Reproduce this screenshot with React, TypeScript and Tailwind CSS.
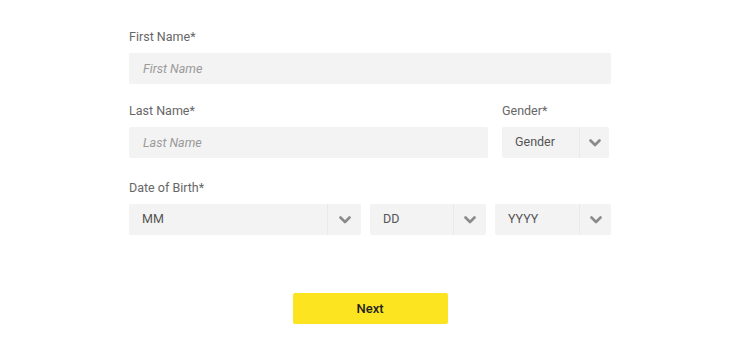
import React from "react";

function Chevron() {
  return (
    <svg width="12" height="8" viewBox="0 0 12 8" fill="none">
      <polyline points="1.5,1.5 6,6 10.5,1.5" stroke="#8a8a8a" strokeWidth="2.6" strokeLinecap="round" strokeLinejoin="round" />
    </svg>
  );
}

function Select({ value, width, arrow }: { value: string; width: string; arrow: string }) {
  return (
    <div className={`flex h-[31px] items-stretch rounded-[2px] bg-[#f3f3f3] ${width}`}>
      <div className="flex flex-1 items-center pl-[13px] text-[12.5px] text-[#555]">{value}</div>
      <div className={`flex items-center justify-center border-l border-[#e9e9e9] ${arrow}`}>
        <Chevron />
      </div>
    </div>
  );
}

function Label({ children }: { children: React.ReactNode }) {
  return <div className="mb-2 h-4 text-[12.5px] leading-4 text-[#666]">{children}</div>;
}

export default function App() {
  return (
    <div className="flex h-[352px] w-full justify-center bg-white font-['Roboto',sans-serif]">
      <div className="w-[482px] pt-[29px]">
        <Label>First Name*</Label>
        <input
          placeholder="First Name"
          className="h-[31px] w-full rounded-[2px] bg-[#f3f3f3] px-[14px] text-[12.5px] italic text-[#555] outline-none placeholder:text-[#9a9a9a]"
        />

        <div className="mt-[19px] flex gap-[14px]">
          <div className="w-[359px]">
            <Label>Last Name*</Label>
            <input
              placeholder="Last Name"
              className="h-[31px] w-full rounded-[2px] bg-[#f3f3f3] px-[14px] text-[12.5px] italic text-[#555] outline-none placeholder:text-[#9a9a9a]"
            />
          </div>
          <div className="w-[107px]">
            <Label>Gender*</Label>
            <Select value="Gender" width="w-[107px]" arrow="w-[30px]" />
          </div>
        </div>

        <div className="mt-[22px]">
          <Label>Date of Birth*</Label>
          <div className="flex gap-[9px]">
            <Select value="MM" width="w-[232px]" arrow="w-[34px]" />
            <Select value="DD" width="w-[116px]" arrow="w-[33px]" />
            <Select value="YYYY" width="w-[116px]" arrow="w-[32px]" />
          </div>
        </div>

        <div className="mt-[58px] flex justify-center">
          <button className="h-[31px] w-[155px] rounded-[2px] bg-[#fde420] text-[13px] font-medium text-[#222]">
            Next
          </button>
        </div>
      </div>
    </div>
  );
}
